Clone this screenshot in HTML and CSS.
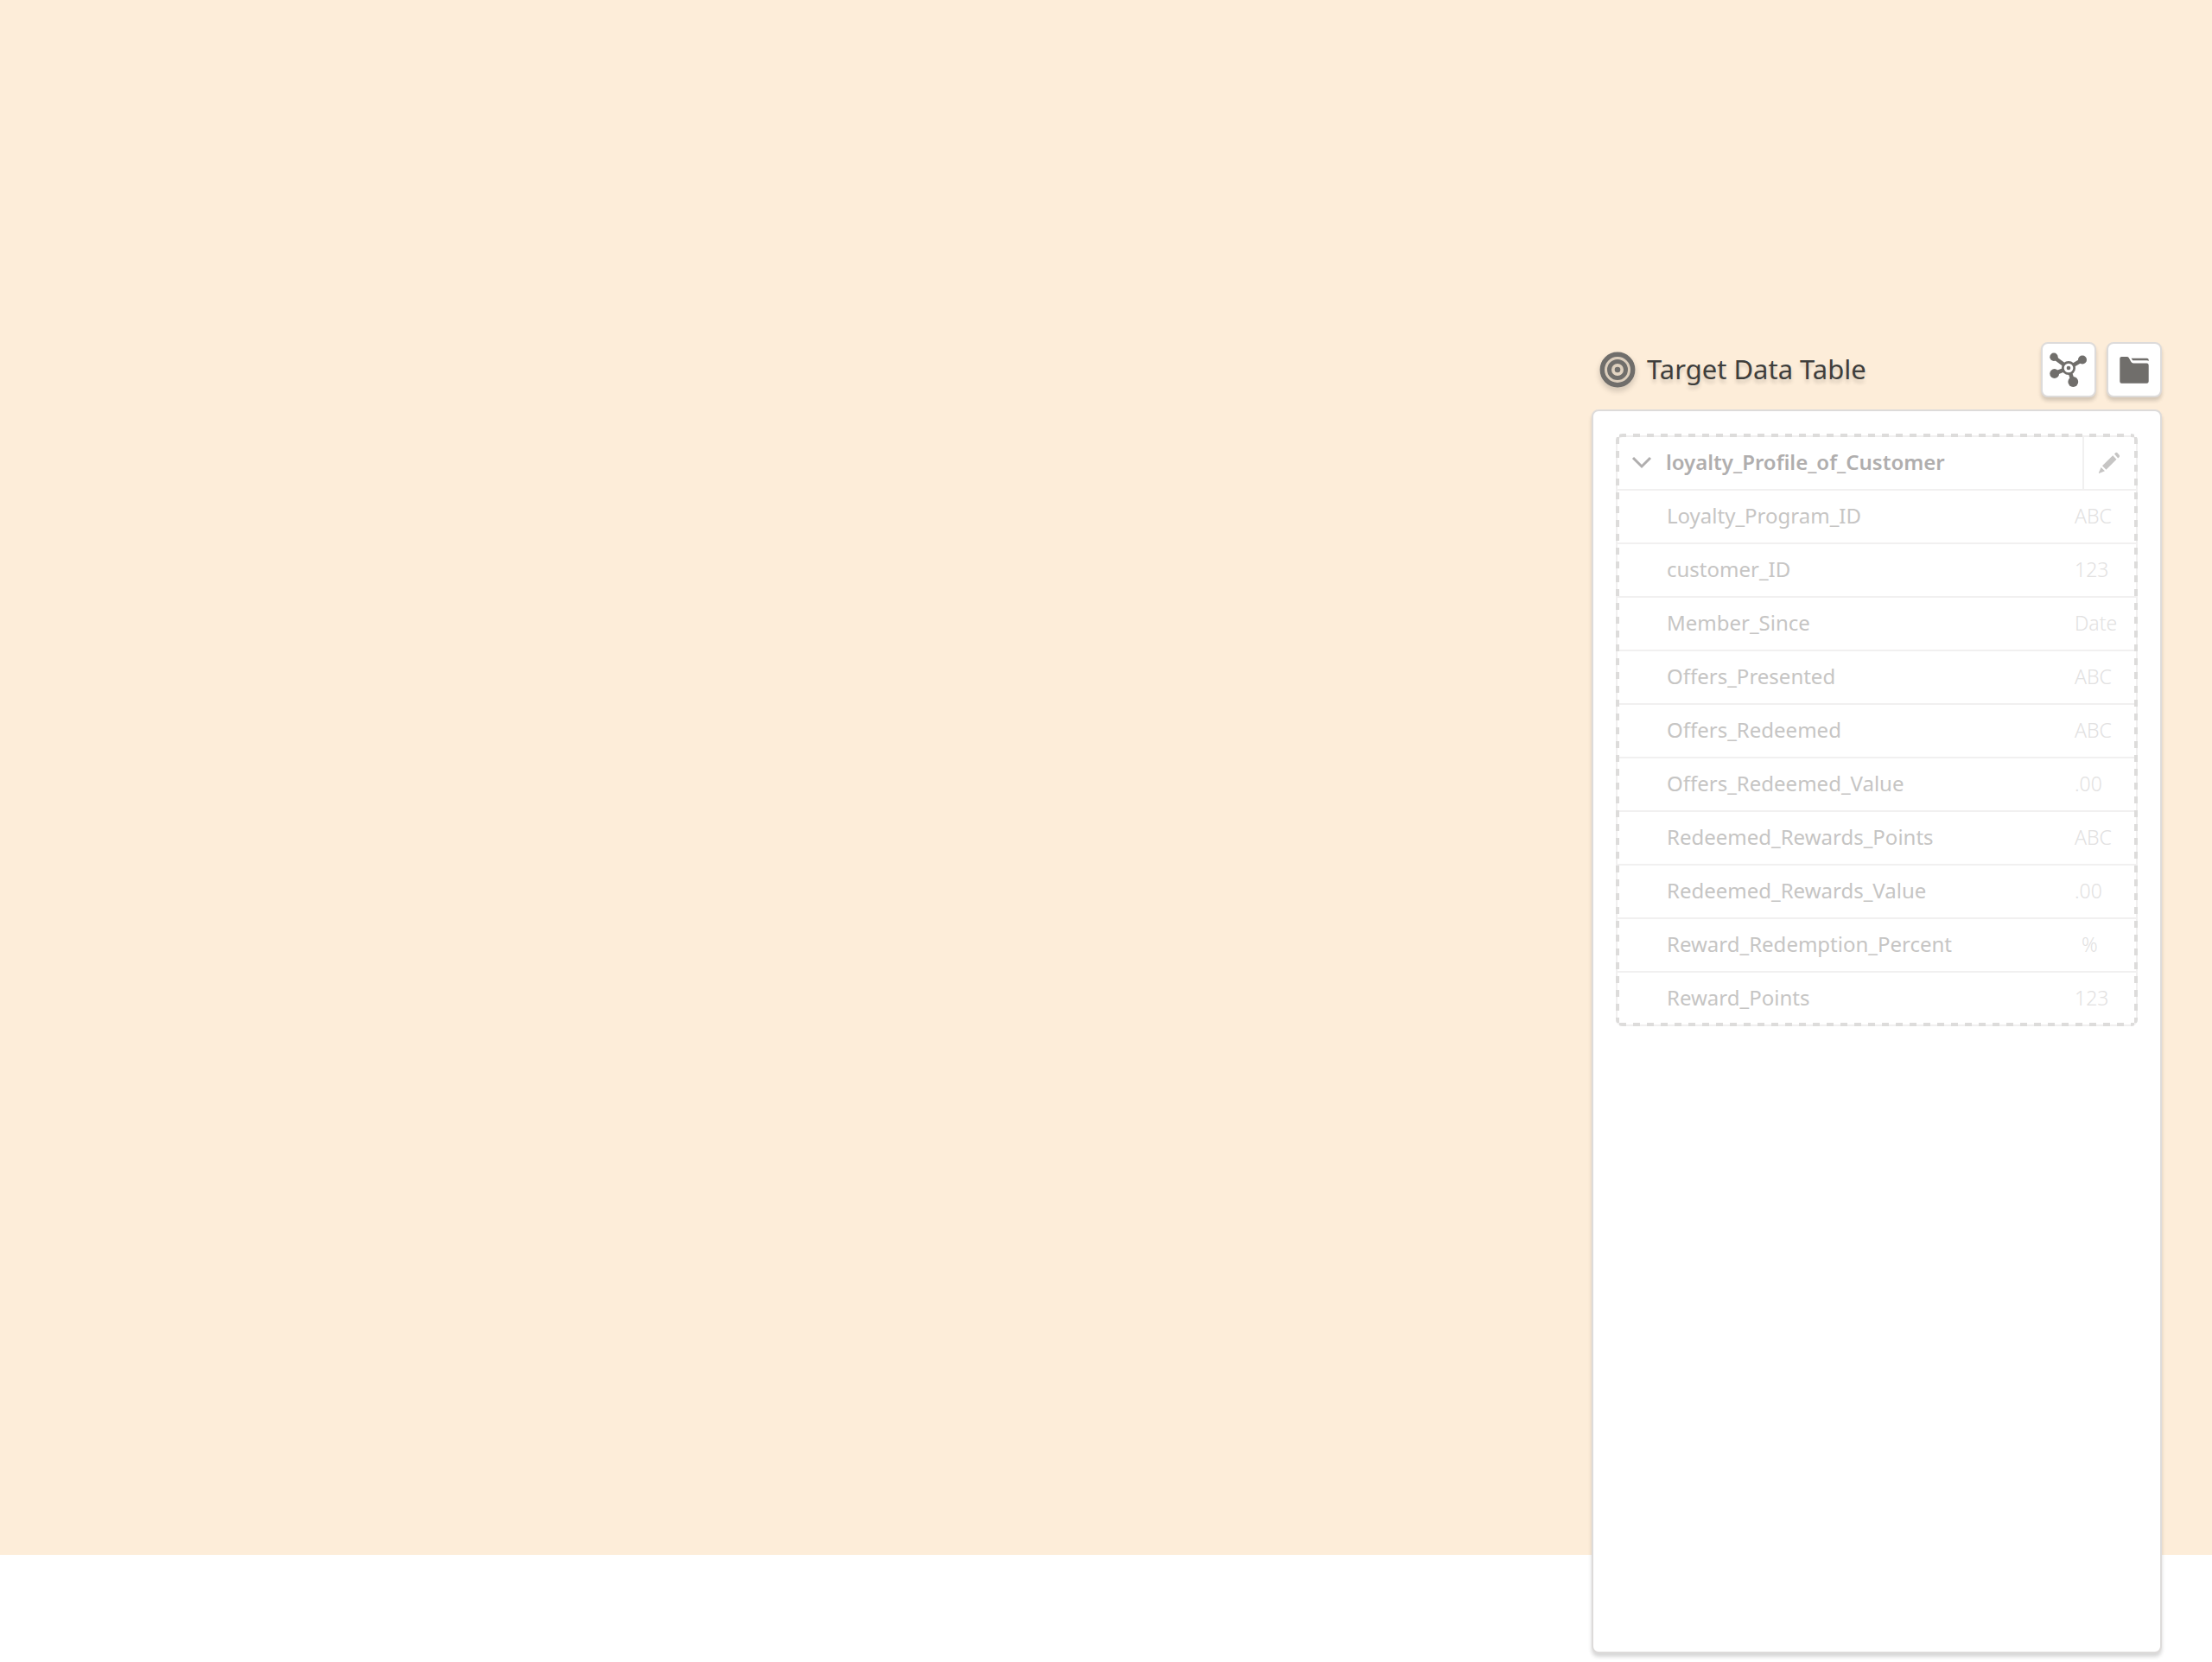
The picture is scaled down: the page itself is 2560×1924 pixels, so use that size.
FILE: index.html
```html
<!DOCTYPE html>
<html lang="en">
<head>
<meta charset="utf-8">
<title>Target Data Table</title>
<meta name="viewport" content="width=device-width, initial-scale=1">
<link rel="stylesheet" href="styles.css">
</head>
<body>
<main class="workspace">
  <section class="target" aria-labelledby="target-title">
    <header class="target-header">
      <svg class="target-icon" viewBox="0 0 42 42" aria-hidden="true">
        <circle cx="21" cy="21" r="17.7" fill="none" stroke="#706e6b" stroke-width="5.4"/>
        <circle cx="21" cy="21" r="9.5" fill="none" stroke="#706e6b" stroke-width="5"/>
        <circle cx="21" cy="21" r="3.3" fill="#706e6b"/>
      </svg>
      <h1 class="target-title" id="target-title">Target Data Table</h1>
      <button class="tool" type="button" aria-label="Show relationships">
        <svg class="tool-icon" viewBox="0 0 60 60" aria-hidden="true">
          <g stroke="#706e6b" stroke-width="4.6">
            <path d="M13 15.500L30 28L46 18.500M13.500 34.500L30 28L35.300 44" fill="none"/>
          </g>
          <g fill="#706e6b">
            <circle cx="13" cy="15.300" r="4.700"/>
            <circle cx="46" cy="18.500" r="5"/>
            <circle cx="13.700" cy="34.500" r="5.400"/>
            <circle cx="35.300" cy="44" r="5.900"/>
            <circle cx="30" cy="28" r="8"/>
          </g>
          <circle cx="30" cy="28" r="5.300" fill="#fff"/>
          <circle cx="30" cy="28" r="2.300" fill="#706e6b"/>
        </svg>
      </button>
      <button class="tool" type="button" aria-label="Open folder">
        <svg class="tool-icon" viewBox="0 0 60 60" aria-hidden="true">
          <g fill="#706e6b">
            <path d="M15.300 15H21.500Q23 15 23.800 16.300L26.300 20.800Q27.300 22.500 29 22.500H44.500Q46.700 22.500 46.700 24.700V43.500Q46.700 45.700 44.500 45.700H15.300Q13.300 45.700 13.300 43.500V17Q13.300 15 15.300 15Z"/>
            <path d="M26.500 16.700H44.700Q46.700 16.700 46.700 18.800V20Q46.200 19.200 44.700 19.200H28.200Z"/>
          </g>
        </svg>
      </button>
    </header>
    <div class="panel">
      <article class="entity">
        <header class="entity-header">
          <button class="toggle" type="button" aria-expanded="true" aria-controls="fields" aria-label="Collapse fields">
            <svg class="toggle-icon" viewBox="0 0 24 16" aria-hidden="true"><path d="M2 2L12 12L22 2" fill="none" stroke="#b0aeae" stroke-width="3"/></svg>
          </button>
          <h2 class="entity-name">loyalty_Profile_of_Customer</h2>
          <button class="edit" type="button" aria-label="Edit table">
            <svg class="edit-icon" viewBox="0 0 26 26" aria-hidden="true">
              <g fill="#c6c5c4">
                <path d="M19 2.500L20.500 1Q21.500 0.500 22.500 1.300L24.700 3.800Q25.500 5 24.800 5.900L23.200 7.500Z"/>
                <path d="M17.200 4.300L21.500 8.800L9.500 20.700L5 16.300Z"/>
                <path d="M3.600 18L8 22.300L1.800 24.800Q0.500 25.200 1 23.900Z"/>
              </g>
            </svg>
          </button>
        </header>
        <table class="fields" id="fields" aria-label="Fields">
          <tbody>
            <tr><th scope="row">Loyalty_Program_ID</th><td>ABC</td></tr>
            <tr><th scope="row">customer_ID</th><td>123</td></tr>
            <tr><th scope="row">Member_Since</th><td>Date</td></tr>
            <tr><th scope="row">Offers_Presented</th><td>ABC</td></tr>
            <tr><th scope="row">Offers_Redeemed</th><td>ABC</td></tr>
            <tr><th scope="row">Offers_Redeemed_Value</th><td>.00</td></tr>
            <tr><th scope="row">Redeemed_Rewards_Points</th><td>ABC</td></tr>
            <tr><th scope="row">Redeemed_Rewards_Value</th><td>.00</td></tr>
            <tr><th scope="row">Reward_Redemption_Percent</th><td class="symbol">%</td></tr>
            <tr><th scope="row">Reward_Points</th><td>123</td></tr>
          </tbody>
        </table>
      </article>
    </div>
  </section>
</main>
</body>
</html>
```
FILE: styles.css
```css
* {
  box-sizing: border-box;
}

body {
  margin: 0;
  background: #fff linear-gradient(#fdedd9, #fdedd9) no-repeat 0 0 / 100% 1800px;
  color: #3e3e3c;
  font-family: "Noto Sans", "Open Sans", sans-serif;
}

button {
  margin: 0;
  padding: 0;
  border: 0;
  background: none;
  cursor: pointer;
}

svg {
  display: block;
}

.workspace {
  display: flex;
  justify-content: flex-end;
  min-height: 100vh;
  padding: 396px 58px 10px;
}

.target {
  display: flex;
  flex-direction: column;
  gap: 14px;
  flex: 0 1 660px;
}

.target-header {
  display: flex;
  align-items: center;
  gap: 12px;
  padding-left: 9px;
}

.target-icon {
  width: 42px;
  height: 42px;
  filter: drop-shadow(0 4px 3px rgba(0, 0, 0, 0.2));
}

.target-title {
  flex: 1;
  margin: 0;
  padding: 0 0 2px 1px;
  font-size: 31px;
  font-weight: 400;
  line-height: 40px;
  text-shadow: 0 4px 4px rgba(0, 0, 0, 0.16);
}

.tool {
  width: 64px;
  height: 64px;
  border: 2px solid #dddbda;
  border-radius: 8px;
  background: #fff;
  box-shadow: 0 4px 4px rgba(0, 0, 0, 0.16);
}

.tool-icon {
  width: 60px;
  height: 60px;
}

.panel {
  flex: 1;
  padding: 26px;
  border: 2px solid #dddbda;
  border-radius: 8px;
  background: #fff;
  box-shadow: 0 4px 4px rgba(0, 0, 0, 0.16);
}

.entity {
  position: relative;
  padding: 4px 2px 2px;
}

/* Solid outline under the dashes */
.entity::before {
  content: "";
  position: absolute;
  inset: 2px 0 0;
  border: 2px solid #f1f0f0;
  border-radius: 8px;
}

/* Dashed outline: 8px dashes, 8px gaps */
.entity::after {
  content: "";
  position: absolute;
  inset: 0;
  border-radius: 8px;
  background:
    repeating-linear-gradient(90deg, #dddcdb 0 8px, transparent 8px 16px) 4px 0 / calc(100% - 8px) 4px no-repeat,
    repeating-linear-gradient(90deg, #dddcdb 0 8px, transparent 8px 16px) 4px 100% / calc(100% - 8px) 4px no-repeat,
    repeating-linear-gradient(180deg, #dddcdb 0 8px, transparent 8px 16px) 0 4px / 4px calc(100% - 8px) no-repeat,
    repeating-linear-gradient(180deg, #dddcdb 0 8px, transparent 8px 16px) 100% 4px / 4px calc(100% - 8px) no-repeat;
  pointer-events: none;
}

.entity-header {
  position: relative;
  display: flex;
  align-items: center;
  height: 62px;
  border-bottom: 2px solid #f1f0f0;
}

.toggle {
  display: grid;
  place-items: center;
  width: 56px;
  height: 60px;
}

.toggle-icon {
  width: 24px;
  height: 16px;
}

.entity-name {
  flex: 1;
  margin: 0;
  padding-bottom: 2px;
  color: #b0aeae;
  font-size: 24px;
  font-weight: 600;
  line-height: 32px;
}

.edit {
  display: grid;
  place-items: center;
  width: 62px;
  height: 60px;
  padding-right: 2px;
  border-left: 2px solid #f1f0f0;
}

.edit-icon {
  width: 26px;
  height: 26px;
}

.fields {
  width: 100%;
  border-collapse: separate;
  border-spacing: 0;
  table-layout: fixed;
}

.fields th,
.fields td {
  height: 62px;
  padding: 0 0 2px;
  border-bottom: 2px solid #f1f0f0;
  line-height: 32px;
  text-align: left;
  vertical-align: middle;
}

.fields tr:last-child > * {
  height: 60px;
  border-bottom: 0;
}

.fields th {
  padding-left: 57px;
  color: #c6c5c4;
  font-size: 24px;
  font-weight: 400;
}

.fields td {
  width: 71px;
  color: #e2e1e1;
  font-size: 23px;
  font-weight: 300;
}

.fields .symbol {
  padding-left: 8px;
}
```
